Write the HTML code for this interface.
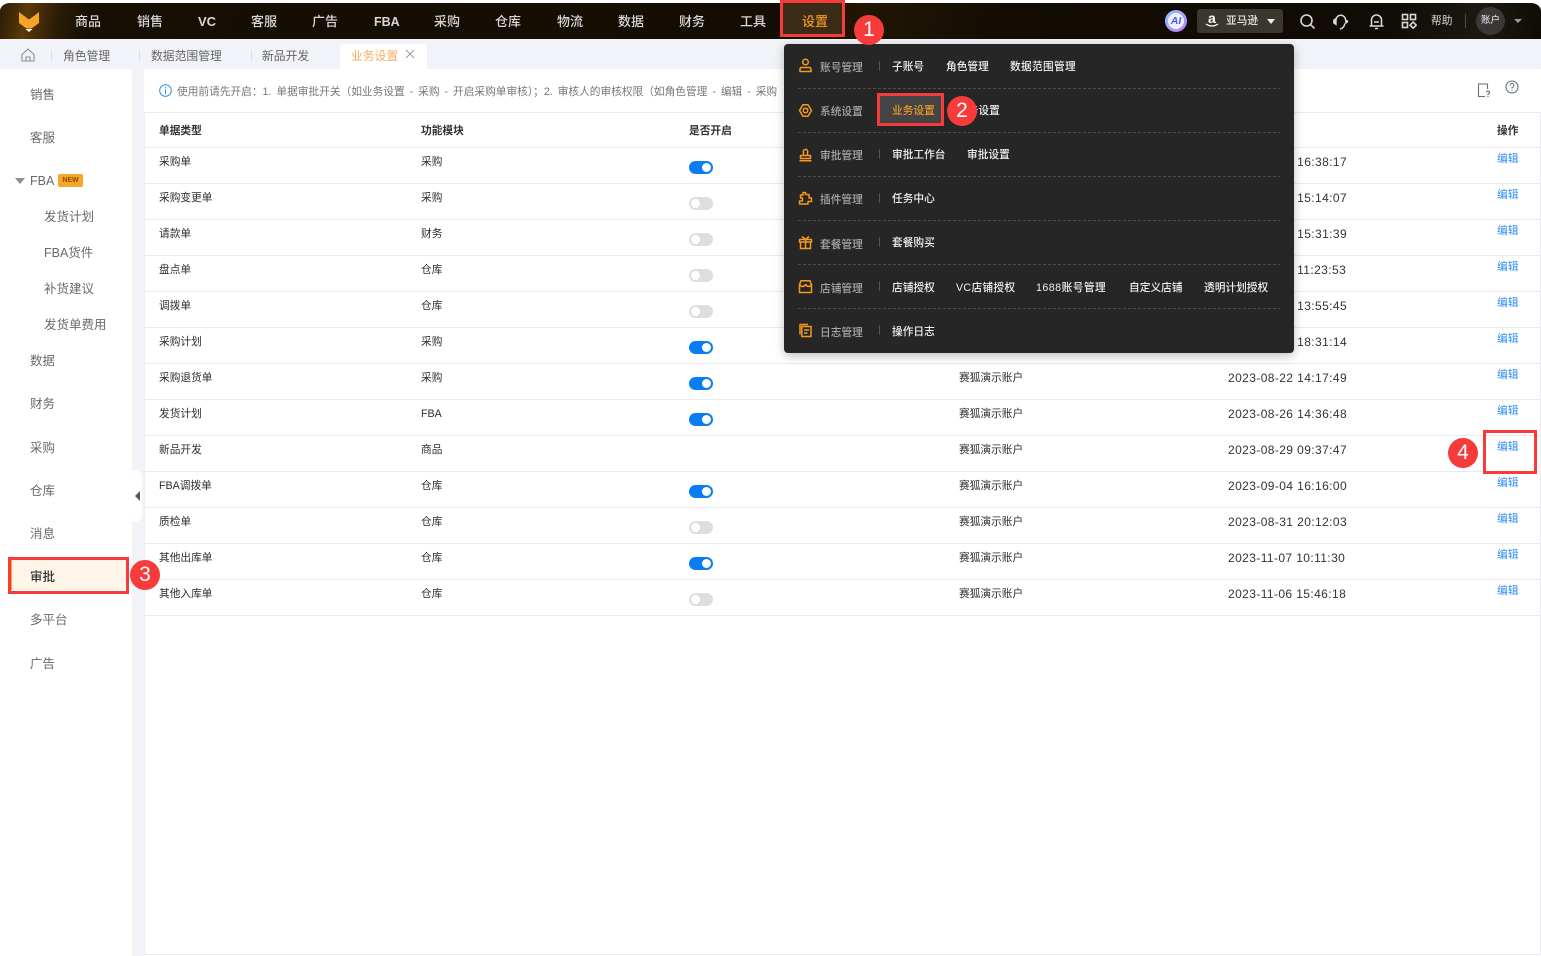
<!DOCTYPE html>
<html lang="zh-CN">
<head>
<meta charset="utf-8">
<title>业务设置</title>
<style>
*{box-sizing:border-box}
html,body{margin:0;padding:0;width:1541px;height:956px;overflow:hidden;background:#fff;font-family:"Liberation Sans","Noto Sans CJK SC",sans-serif}
.a{position:absolute;white-space:nowrap}
#nav{position:absolute;left:0;top:3px;width:1541px;height:36px;border-radius:10px 10px 0 0 / 8px 8px 0 0;background:linear-gradient(100deg,#2a1a05 0,#5a3a08 1.8%,#2a1b06 4%,#160f04 6%,#130d03 50%,#221604 56%,#130d04 65%,#0f0b05 90%,#1d1812 96%,#0f0b05 100%)}
.n{position:absolute;top:14px;height:16px;line-height:16px;font-size:13px;color:#d8d8d8;font-weight:500;white-space:nowrap}
#tabs{position:absolute;left:0;top:39px;width:1541px;height:30px;background:#f1f3f8}
.t{position:absolute;top:48px;line-height:16px;font-size:11.8px;color:#666;white-space:nowrap}
.sep{position:absolute;top:50px;width:1px;height:10px;background:#dcdee3}
#gap{position:absolute;left:132px;top:69px;width:12px;height:887px;background:#f1f3f8}
.s{position:absolute;left:30px;margin-top:1px;line-height:16px;font-size:12.5px;color:#6a6a6a;white-space:nowrap}
.s2{left:44px}
.h{position:absolute;margin-top:1px;line-height:14px;font-size:10.7px;color:#333;font-weight:700;white-space:nowrap}
.c{position:absolute;margin-top:1px;line-height:14px;font-size:10.7px;color:#2e2e2e;white-space:nowrap}
.d{position:absolute;left:1228px;margin-top:1px;line-height:14px;font-size:12px;color:#333;letter-spacing:.4px;white-space:nowrap}
.e{position:absolute;left:1497px;margin-top:1px;line-height:14px;font-size:10.7px;color:#2f8cf5;white-space:nowrap}
.l{position:absolute;left:145px;width:1396px;height:1px;background:#e8eaee}
.on,.off{position:absolute;left:689px;width:24px;height:13px;border-radius:7px}
.on{background:#0a7df5}.off{background:#dcdee2}
.on:after,.off:after{content:"";position:absolute;top:2px;width:9px;height:9px;border-radius:50%;background:#fff}
.on:after{right:2px}.off:after{left:2px}
#menu{position:absolute;left:784px;top:44px;width:510px;height:309px;background:#262626;border-radius:4px;box-shadow:0 3px 10px rgba(0,0,0,.25)}
.dl{position:absolute;left:798px;width:482px;height:1px;background-image:linear-gradient(90deg,#4d4d4d 0,#4d4d4d 3px,transparent 3px);background-size:5px 1px}
.mc{position:absolute;left:820px;margin-top:1px;line-height:14px;font-size:10.7px;color:#a8a8a8;font-weight:500;white-space:nowrap}
.mi{position:absolute;margin-top:1px;line-height:14px;font-size:10.7px;color:#f0f0f0;font-weight:500;white-space:nowrap}
.ms{position:absolute;left:879px;width:1px;height:10px;background:#555}
.ic{position:absolute;left:798px;width:15px;height:15px;fill:none;stroke:#f49a1c;stroke-width:1.5;stroke-linejoin:round}
.rb{position:absolute;border:3px solid #f73b3b}
.ci{position:absolute;width:30px;height:30px;border-radius:50%;background:#f73b3b;color:#fff;font-size:21px;line-height:30px;text-align:center;font-family:"Liberation Sans",sans-serif}
</style>
</head>
<body>
<div id="nav"></div>
<svg class="a" style="left:19px;top:12px" width="20" height="20" viewBox="0 0 20 20"><path d="M0 0 L4.500 3.500 L10 7.500 L15.500 3.500 L20 0 V11 L12.500 16.500 H7.500 L0 11Z" fill="#f7a527"/><path d="M6.500 17H13.500L10 20Z" fill="#fff"/></svg>
<div class="n" style="left:75px">商品</div>
<div class="n" style="left:137px">销售</div>
<div class="n" style="left:198px;font-weight:700">VC</div>
<div class="n" style="left:251px">客服</div>
<div class="n" style="left:312px">广告</div>
<div class="n" style="left:374px;font-weight:700;font-size:12.5px">FBA</div>
<div class="n" style="left:434px">采购</div>
<div class="n" style="left:495px">仓库</div>
<div class="n" style="left:557px">物流</div>
<div class="n" style="left:618px">数据</div>
<div class="n" style="left:679px">财务</div>
<div class="n" style="left:740px">工具</div>
<div class="a" style="left:783px;top:3px;width:60px;height:33px;background:#3a2c16"></div>
<div class="n" style="left:802px;color:#f09a20">设置</div>

<div class="a" style="left:1165px;top:10px;width:22px;height:22px;border-radius:50%;background:linear-gradient(135deg,#8ec4ff,#c07cf6)"></div>
<div class="a" style="left:1168px;top:13px;width:16px;height:16px;border-radius:50%;background:#eef0ff;color:#4a5be8;font-size:10.5px;font-weight:700;font-style:italic;line-height:16px;text-align:center">AI</div>
<div class="a" style="left:1197px;top:9px;width:86px;height:24px;border-radius:3px;background:#3c3630"></div>
<div class="a" style="left:1208px;top:11px;color:#fff;font-size:14px;font-weight:700;line-height:15px">a</div>
<svg class="a" style="left:1205px;top:23px" width="14" height="5" viewBox="0 0 14 5"><path d="M1 1Q7 5 13 1" fill="none" stroke="#fff" stroke-width="1.2"/></svg>
<div class="a" style="left:1226px;top:14px;color:#e8e8e8;font-size:10.7px;font-weight:500;line-height:14px">亚马逊</div>
<div class="a" style="left:1267px;top:19px;width:0;height:0;border-left:4px solid transparent;border-right:4px solid transparent;border-top:5px solid #f0f0f0"></div>
<svg class="a" style="left:1299px;top:13px" width="17" height="17" viewBox="0 0 17 17" fill="none" stroke="#d8d8d8" stroke-width="1.6"><circle cx="7.500" cy="7.500" r="5.500"/><path d="M11.800 11.800L15.500 15.500"/></svg>
<svg class="a" style="left:1332px;top:14px" width="17" height="16" viewBox="0 0 17 16" fill="none" stroke="#d8d8d8" stroke-width="1.500"><path d="M4 6A4.500 4.500 0 0 1 13.500 6M8 15C10.500 14.500 12.500 12.500 12.800 9.500"/><path d="M4.300 4V11L1.500 9V6Z" fill="#d8d8d8" stroke-width=".8"/><path d="M13.500 5.500L15.800 7V8L13.500 9.500Z" fill="#d8d8d8" stroke-width=".8"/></svg>
<svg class="a" style="left:1368px;top:13px" width="17" height="17" viewBox="0 0 17 17" fill="none" stroke="#d8d8d8" stroke-width="1.600"><path d="M3.500 13V7A5 5 0 0 1 13.500 7V13M1.500 13H15.500M6 9H11M7 15.500H10"/></svg>
<svg class="a" style="left:1401px;top:13px" width="16" height="16" viewBox="0 0 16 16" fill="none" stroke="#d8d8d8" stroke-width="1.600"><rect x="1.500" y="1.500" width="5" height="5"/><rect x="9.500" y="1.500" width="5" height="5"/><rect x="1.500" y="9.500" width="5" height="5"/><path d="M12.200 9L15.200 12.200L12.200 15.200L9 12.200Z"/></svg>
<div class="a" style="left:1431px;top:14px;color:#d8d8d8;font-size:10.700px;line-height:14px">帮助</div>
<div class="a" style="left:1465px;top:14px;width:1px;height:14px;background:#4a4a4a"></div>
<div class="a" style="left:1476px;top:7px;width:29px;height:28px;border-radius:50%;background:#3a3835;color:#eee;font-size:9.500px;line-height:27px;text-align:center">账户</div>
<div class="a" style="left:1514px;top:19px;width:0;height:0;border-left:4px solid transparent;border-right:4px solid transparent;border-top:4px solid #999"></div>

<div id="tabs"></div>
<svg class="a" style="left:21px;top:48px" width="14" height="14" viewBox="0 0 14 14" fill="none" stroke="#8b8f96" stroke-width="1.100"><path d="M1 6.500L7 1L13 6.500V13H1Z"/><path d="M5 13V9H9V13"/></svg>
<div class="sep" style="left:51px"></div><div class="t" style="left:63px">角色管理</div>
<div class="sep" style="left:139px"></div><div class="t" style="left:151px">数据范围管理</div>
<div class="sep" style="left:251px"></div><div class="t" style="left:262px">新品开发</div>
<div class="a" style="left:340px;top:44px;width:87px;height:25px;background:#fff;border-radius:3px 3px 0 0"></div>
<div class="t" style="left:351px;color:#f9ad5c">业务设置</div>
<svg class="a" style="left:405px;top:49px" width="10" height="10" viewBox="0 0 10 10" stroke="#999" stroke-width="1"><path d="M1 1L9 9M9 1L1 9"/></svg>

<div id="gap"></div>
<div class="a" style="left:132px;top:471px;width:10px;height:50px;background:#fff;border-radius:0 5px 5px 0"></div>
<div class="a" style="left:135px;top:491px;width:0;height:0;border-top:5px solid transparent;border-bottom:5px solid transparent;border-right:5px solid #555"></div>

<div class="s" style="top:86px">销售</div>
<div class="s" style="top:129px">客服</div>
<div class="a" style="left:15px;top:178px;width:0;height:0;border-left:5px solid transparent;border-right:5px solid transparent;border-top:6px solid #8f8f8f"></div>
<div class="s" style="top:172px">FBA</div>
<div class="a" style="left:58px;top:174px;width:25px;height:13px;border-radius:2px;background:#f7a52b;color:#8a5200;font-size:7px;font-weight:700;line-height:13px;text-align:center;font-family:'Liberation Sans',sans-serif">NEW</div>
<div class="s s2" style="top:208px">发货计划</div>
<div class="s s2" style="top:244px">FBA货件</div>
<div class="s s2" style="top:280px">补货建议</div>
<div class="s s2" style="top:316px">发货单费用</div>
<div class="s" style="top:352px">数据</div>
<div class="s" style="top:395px">财务</div>
<div class="s" style="top:439px">采购</div>
<div class="s" style="top:482px">仓库</div>
<div class="s" style="top:525px">消息</div>
<div class="a" style="left:11px;top:560px;width:115px;height:30px;background:#fff6e9;border-left:1px solid #f6a623"></div>
<div class="s" style="top:568px;color:#333;font-weight:500">审批</div>
<div class="s" style="top:611px">多平台</div>
<div class="s" style="top:655px">广告</div>

<svg class="a" style="left:159px;top:84px" width="13" height="13" viewBox="0 0 13 13" fill="none" stroke="#2f8cf5"><circle cx="6.500" cy="6.500" r="5.800"/><path d="M6.500 5.500V10M6.500 3V4.300"/></svg>
<div class="c" style="left:177px;top:84px;color:#777;word-spacing:2px;width:602px;overflow:hidden">使用前请先开启：1. 单据审批开关（如业务设置 - 采购 - 开启采购单审核）；2. 审核人的审核权限（如角色管理 - 编辑 - 采购</div>
<svg class="a" style="left:1477px;top:83px" width="14" height="15" viewBox="0 0 14 15" fill="none" stroke="#7a6a66" stroke-width="1.100"><path d="M8 13.500H1.500V1H10.500V6"/><path d="M9.500 9.200A1.500 1.500 0 1 1 11 11V12M11 13V14" stroke="#5a6a80"/></svg>
<svg class="a" style="left:1505px;top:80px" width="14" height="14" viewBox="0 0 14 14" fill="none" stroke="#5f6f80" stroke-width="1.100"><circle cx="7" cy="7" r="6"/><path d="M5 5.500A2 2 0 1 1 7 7.500V8.500M7 9.800V10.800"/></svg>

<div class="a" style="left:144px;top:112px;width:1px;height:843px;background:#eceef2"></div>
<div class="l" style="top:112px"></div>
<div class="a" style="left:145px;top:954px;width:1396px;height:1px;background:#e8eaee"></div>
<div class="a" style="left:1540px;top:112px;width:1px;height:843px;background:#e8eaee"></div>
<div class="h" style="left:159px;top:123px">单据类型</div>
<div class="h" style="left:421px;top:123px">功能模块</div>
<div class="h" style="left:689px;top:123px">是否开启</div>
<div class="h" style="left:1497px;top:123px">操作</div>
<div class="l" style="top:147px"></div>

<div class="c" style="left:159px;top:154px">采购单</div><div class="c" style="left:421px;top:154px">采购</div><div class="on" style="top:161px"></div><div class="d" style="top:154px">2023-08-19 16:38:17</div><div class="e" style="top:151px">编辑</div><div class="l" style="top:183px"></div>
<div class="c" style="left:159px;top:190px">采购变更单</div><div class="c" style="left:421px;top:190px">采购</div><div class="off" style="top:197px"></div><div class="d" style="top:190px">2023-08-19 15:14:07</div><div class="e" style="top:187px">编辑</div><div class="l" style="top:219px"></div>
<div class="c" style="left:159px;top:226px">请款单</div><div class="c" style="left:421px;top:226px">财务</div><div class="off" style="top:233px"></div><div class="d" style="top:226px">2023-08-19 15:31:39</div><div class="e" style="top:223px">编辑</div><div class="l" style="top:255px"></div>
<div class="c" style="left:159px;top:262px">盘点单</div><div class="c" style="left:421px;top:262px">仓库</div><div class="off" style="top:269px"></div><div class="d" style="top:262px">2023-08-20 11:23:53</div><div class="e" style="top:259px">编辑</div><div class="l" style="top:291px"></div>
<div class="c" style="left:159px;top:298px">调拨单</div><div class="c" style="left:421px;top:298px">仓库</div><div class="off" style="top:305px"></div><div class="d" style="top:298px">2023-08-20 13:55:45</div><div class="e" style="top:295px">编辑</div><div class="l" style="top:327px"></div>
<div class="c" style="left:159px;top:334px">采购计划</div><div class="c" style="left:421px;top:334px">采购</div><div class="on" style="top:341px"></div><div class="d" style="top:334px">2023-08-21 18:31:14</div><div class="e" style="top:331px">编辑</div><div class="l" style="top:363px"></div>
<div class="c" style="left:159px;top:370px">采购退货单</div><div class="c" style="left:421px;top:370px">采购</div><div class="on" style="top:377px"></div><div class="c" style="left:959px;top:370px">赛狐演示账户</div><div class="d" style="top:370px">2023-08-22 14:17:49</div><div class="e" style="top:367px">编辑</div><div class="l" style="top:399px"></div>
<div class="c" style="left:159px;top:406px">发货计划</div><div class="c" style="left:421px;top:406px">FBA</div><div class="on" style="top:413px"></div><div class="c" style="left:959px;top:406px">赛狐演示账户</div><div class="d" style="top:406px">2023-08-26 14:36:48</div><div class="e" style="top:403px">编辑</div><div class="l" style="top:435px"></div>
<div class="c" style="left:159px;top:442px">新品开发</div><div class="c" style="left:421px;top:442px">商品</div><div class="c" style="left:959px;top:442px">赛狐演示账户</div><div class="d" style="top:442px">2023-08-29 09:37:47</div><div class="e" style="top:439px">编辑</div><div class="l" style="top:471px"></div>
<div class="c" style="left:159px;top:478px">FBA调拨单</div><div class="c" style="left:421px;top:478px">仓库</div><div class="on" style="top:485px"></div><div class="c" style="left:959px;top:478px">赛狐演示账户</div><div class="d" style="top:478px">2023-09-04 16:16:00</div><div class="e" style="top:475px">编辑</div><div class="l" style="top:507px"></div>
<div class="c" style="left:159px;top:514px">质检单</div><div class="c" style="left:421px;top:514px">仓库</div><div class="off" style="top:521px"></div><div class="c" style="left:959px;top:514px">赛狐演示账户</div><div class="d" style="top:514px">2023-08-31 20:12:03</div><div class="e" style="top:511px">编辑</div><div class="l" style="top:543px"></div>
<div class="c" style="left:159px;top:550px">其他出库单</div><div class="c" style="left:421px;top:550px">仓库</div><div class="on" style="top:557px"></div><div class="c" style="left:959px;top:550px">赛狐演示账户</div><div class="d" style="top:550px">2023-11-07 10:11:30</div><div class="e" style="top:547px">编辑</div><div class="l" style="top:579px"></div>
<div class="c" style="left:159px;top:586px">其他入库单</div><div class="c" style="left:421px;top:586px">仓库</div><div class="off" style="top:593px"></div><div class="c" style="left:959px;top:586px">赛狐演示账户</div><div class="d" style="top:586px">2023-11-06 15:46:18</div><div class="e" style="top:583px">编辑</div><div class="l" style="top:615px"></div>

<div id="menu"></div>
<div class="dl" style="top:88px"></div><div class="dl" style="top:132px"></div><div class="dl" style="top:176px"></div><div class="dl" style="top:220px"></div><div class="dl" style="top:264px"></div><div class="dl" style="top:308px"></div>

<svg class="ic" style="top:58px" viewBox="0 0 15 15"><circle cx="7.500" cy="4" r="2.800"/><path d="M2 13.500V11A1.500 1.500 0 0 1 3.500 9.500H11.500A1.500 1.500 0 0 1 13 11V13.500Z"/></svg>
<div class="mc" style="top:60px">账号管理</div><div class="ms" style="top:61px"></div>
<div class="mi" style="left:892px;top:59px">子账号</div><div class="mi" style="left:946px;top:59px">角色管理</div><div class="mi" style="left:1010px;top:59px;letter-spacing:.3px">数据范围管理</div>

<svg class="ic" style="top:103px" viewBox="0 0 15 15"><path d="M5 1.800H10L13.500 7.500L10 13.200H5L1.500 7.500Z"/><circle cx="7.500" cy="7.500" r="2.300"/></svg>
<div class="mc" style="top:104px">系统设置</div><div class="ms" style="top:105px"></div>
<div class="mi" style="left:957px;top:103px">财务设置</div>
<div class="a" style="left:880px;top:96px;width:63px;height:28px;background:#444"></div>
<div class="mi" style="left:892px;top:103px;color:#f09a20">业务设置</div>

<svg class="ic" style="top:147px" viewBox="0 0 15 15"><path d="M5.500 8V5.500A2.200 2.200 0 1 1 9.500 5.500V8"/><path d="M2.500 8.500H12.500V11.500H2.500ZM1.500 13.800H13.500"/></svg>
<div class="mc" style="top:148px">审批管理</div><div class="ms" style="top:149px"></div>
<div class="mi" style="left:892px;top:147px">审批工作台</div><div class="mi" style="left:967px;top:147px">审批设置</div>

<svg class="ic" style="top:191px" viewBox="0 0 15 15"><path d="M1.500 13H10V10.500H13.500V7H11V3.500H7.500V1.500H5V4H2.500V7H4.500V10H1.500Z"/></svg>
<div class="mc" style="top:192px">插件管理</div><div class="ms" style="top:193px"></div>
<div class="mi" style="left:892px;top:191px">任务中心</div>

<svg class="ic" style="top:235px" viewBox="0 0 15 15"><path d="M1.500 4.500H13.500V7H1.500ZM2.500 7V13.500H12.500V7M7.500 4.500V13.500M4 1.500L7.500 4.500L11 1.500"/></svg>
<div class="mc" style="top:237px">套餐管理</div><div class="ms" style="top:237px"></div>
<div class="mi" style="left:892px;top:235px">套餐购买</div>

<svg class="ic" style="top:279px" viewBox="0 0 15 15"><path d="M3 1.800H12L13.500 5.500V13.500H1.500V5.500Z"/><path d="M1.500 5.500Q4.500 9.500 7.500 5.500Q10.500 9.500 13.500 5.500"/></svg>
<div class="mc" style="top:281px">店铺管理</div><div class="ms" style="top:281px"></div>
<div class="mi" style="left:892px;top:280px">店铺授权</div><div class="mi" style="left:956px;top:280px;letter-spacing:.3px">VC店铺授权</div><div class="mi" style="left:1036px;top:280px;letter-spacing:.45px">1688账号管理</div><div class="mi" style="left:1129px;top:280px">自定义店铺</div><div class="mi" style="left:1204px;top:280px">透明计划授权</div>

<svg class="ic" style="top:323px" viewBox="0 0 15 15"><path d="M2 11.500V1.500H10"/><path d="M3.800 3.500H13V13.500H3.800ZM6 7H11M6 10H9.500"/></svg>
<div class="mc" style="top:325px">日志管理</div><div class="ms" style="top:325px"></div>
<div class="mi" style="left:892px;top:324px">操作日志</div>

<div class="rb" style="left:780px;top:0;width:65px;height:37px"></div>
<div class="rb" style="left:877px;top:93px;width:67px;height:33px"></div>
<div class="rb" style="left:8px;top:557px;width:121px;height:37px"></div>
<div class="rb" style="left:1483px;top:430px;width:54px;height:44px"></div>
<div class="ci" style="left:854px;top:15px">1</div>
<div class="ci" style="left:947px;top:96px">2</div>
<div class="ci" style="left:130px;top:560px">3</div>
<div class="ci" style="left:1448px;top:438px">4</div>
</body>
</html>
